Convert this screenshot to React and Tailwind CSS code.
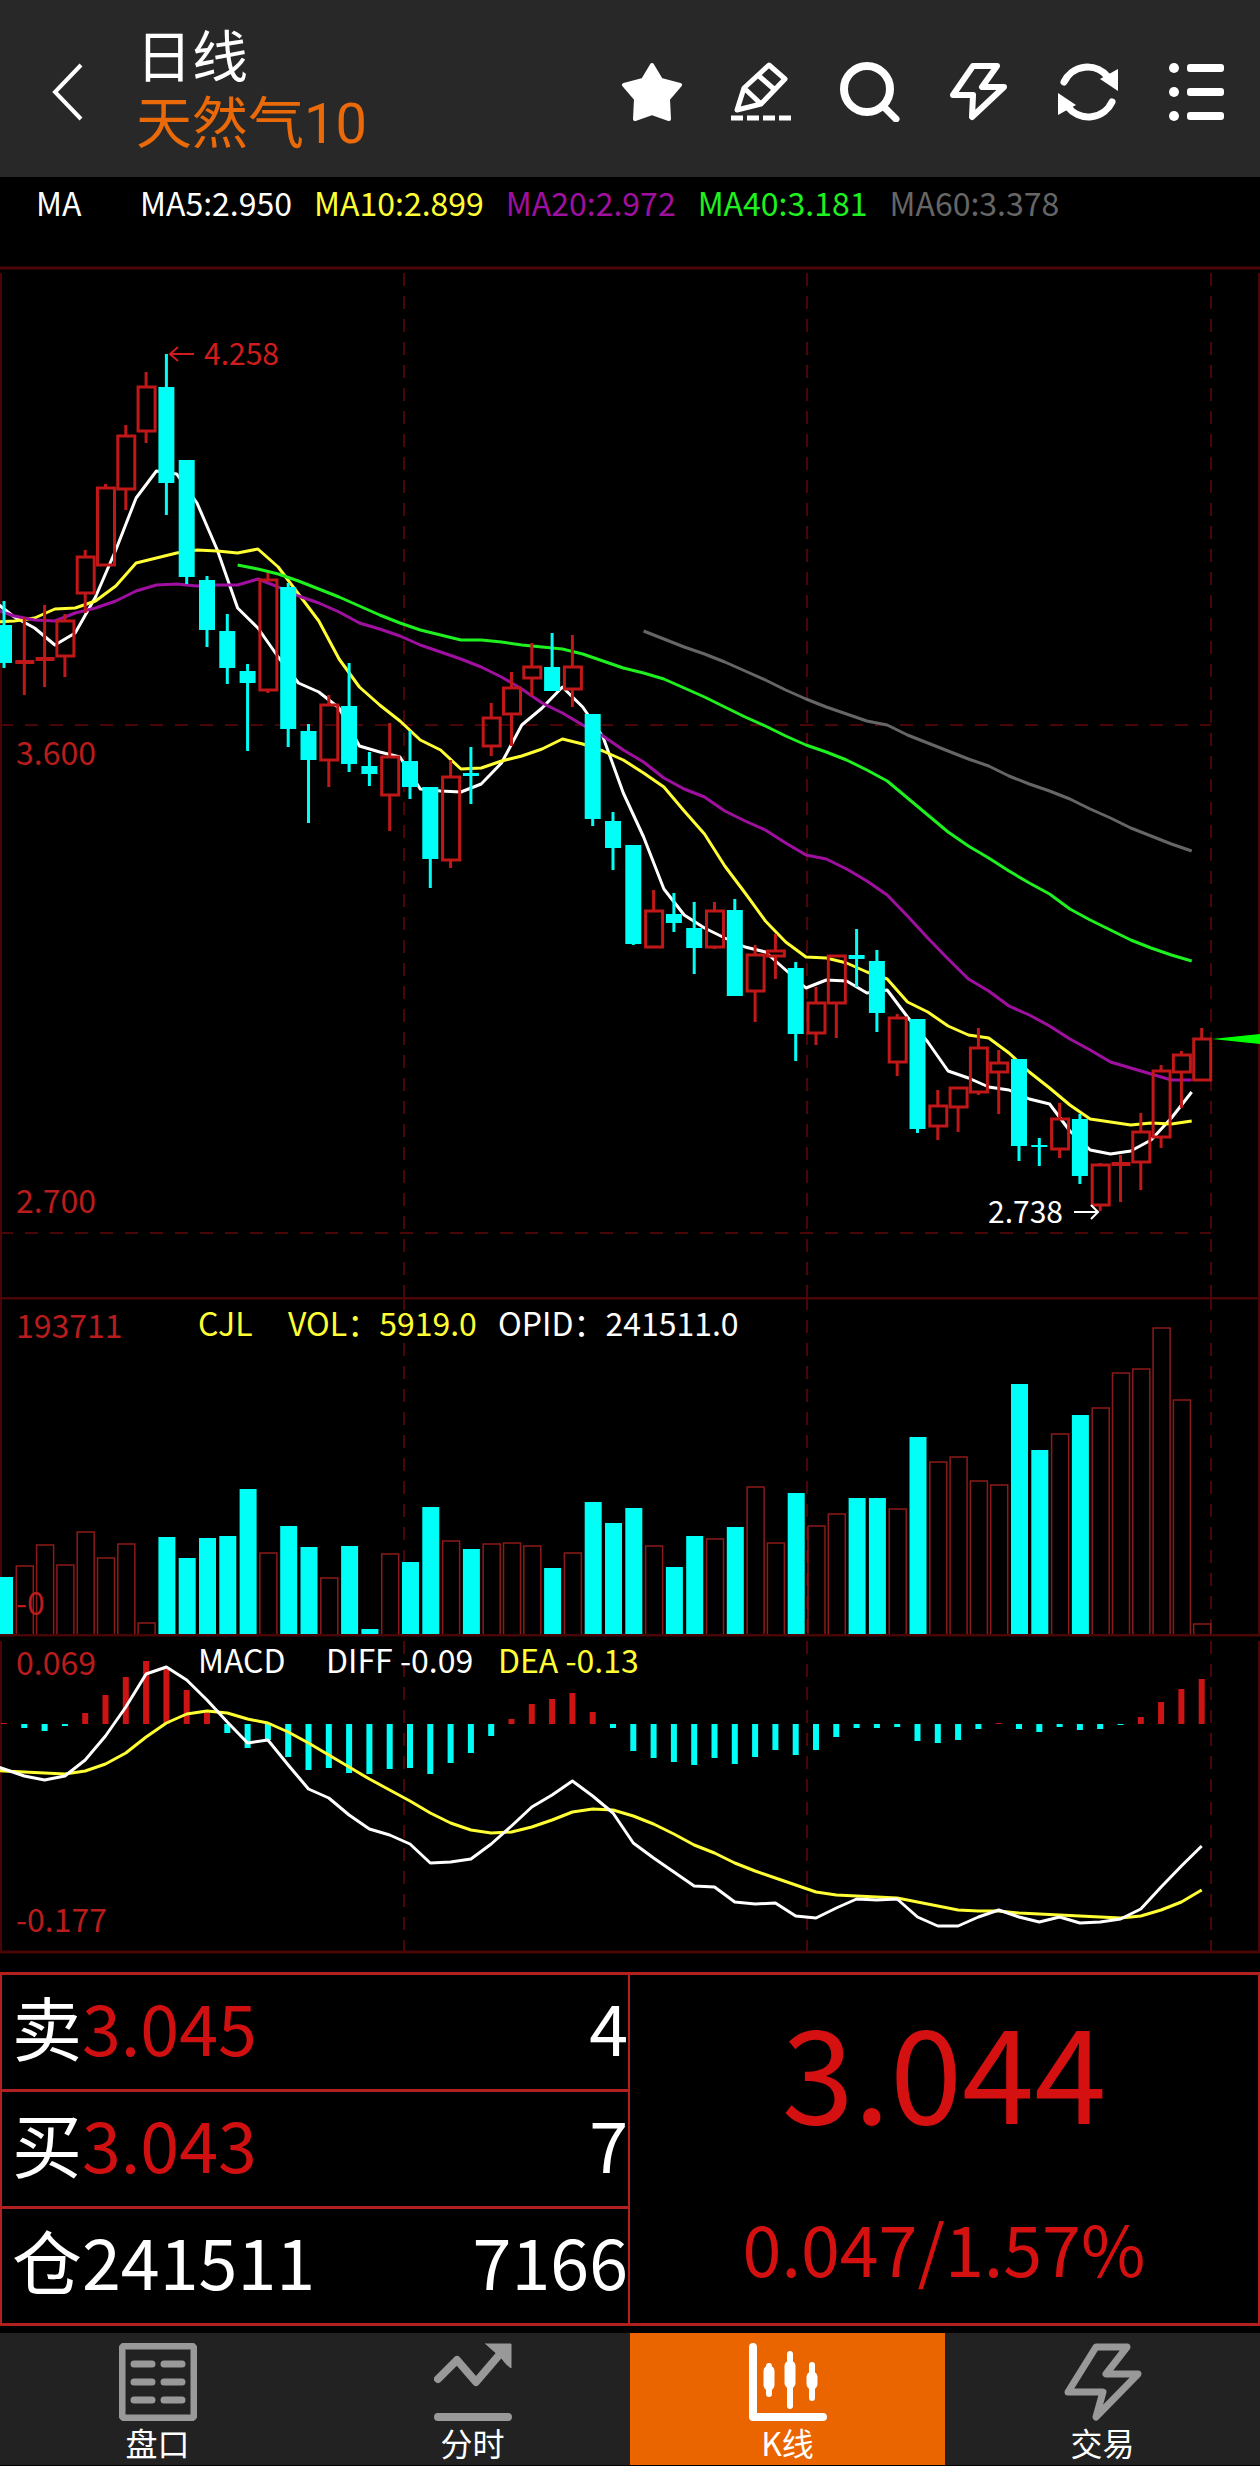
import { useState } from "react";

// [direction, high, body top, body bottom, low]
const candles = [
  ["d", 601, 625, 663, 668], ["u", 617, 662, 662, 695], ["u", 605, 659, 659, 687], ["u", 614, 621, 656, 677],
  ["u", 550, 557, 593, 613], ["u", 484, 488, 565, 565], ["u", 425, 436, 489, 510], ["u", 372, 387, 431, 443],
  ["d", 354, 387, 483, 515], ["d", 460, 460, 577, 584], ["d", 576, 580, 630, 647], ["d", 614, 631, 668, 684],
  ["d", 664, 671, 683, 751], ["u", 573, 580, 690, 693], ["d", 583, 587, 729, 747], ["d", 724, 731, 760, 823],
  ["u", 695, 705, 760, 787], ["d", 663, 706, 764, 772], ["d", 752, 766, 774, 786], ["u", 723, 757, 795, 831],
  ["d", 731, 761, 787, 799], ["d", 787, 787, 859, 888], ["u", 760, 777, 860, 868], ["d", 747, 773, 776, 804],
  ["u", 703, 718, 746, 756], ["u", 672, 688, 714, 746], ["u", 643, 667, 678, 696], ["d", 633, 667, 691, 691],
  ["u", 635, 667, 689, 707], ["d", 714, 714, 819, 826], ["d", 812, 821, 848, 870], ["d", 845, 845, 944, 945],
  ["u", 890, 911, 947, 947], ["d", 893, 914, 923, 932], ["d", 902, 928, 948, 974], ["u", 902, 911, 947, 949],
  ["d", 899, 910, 996, 996], ["u", 945, 955, 991, 1022], ["u", 934, 951, 956, 979], ["d", 962, 968, 1034, 1061],
  ["u", 987, 1003, 1033, 1045], ["u", 955, 956, 1003, 1038], ["d", 929, 955, 959, 987], ["d", 950, 961, 1013, 1032],
  ["u", 1014, 1018, 1062, 1076], ["d", 1019, 1019, 1129, 1133], ["u", 1090, 1106, 1126, 1140], ["u", 1088, 1088, 1107, 1132],
  ["u", 1028, 1048, 1092, 1095], ["u", 1050, 1063, 1072, 1114], ["d", 1059, 1059, 1146, 1161], ["d", 1138, 1145, 1147, 1166],
  ["u", 1103, 1119, 1149, 1158], ["d", 1114, 1119, 1176, 1184], ["u", 1163, 1165, 1205, 1211], ["u", 1155, 1164, 1164, 1202],
  ["u", 1113, 1132, 1162, 1190], ["u", 1065, 1071, 1137, 1148], ["u", 1051, 1055, 1072, 1108], ["u", 1028, 1039, 1080, 1080],
];

const ma5 = [
  601, 617, 628, 645, 633, 597, 550, 498, 471, 474, 503, 550, 608, 628, 657, 683, 692, 708, 746, 752, 757, 789, 791, 792,
  784, 763, 725, 708, 687, 707, 737, 793, 837, 889, 915, 928, 938, 947, 952, 970, 988, 980, 981, 993, 990, 1017, 1042,
  1071, 1078, 1087, 1090, 1099, 1104, 1131, 1150, 1154, 1151, 1140, 1118, 1092,
];
const ma10 = [
  622, 621, 618, 609, 608, 601, 586, 563, 558, 553, 550, 551, 553, 549, 567, 594, 621, 659, 687, 705, 721, 740, 750, 769,
  768, 761, 756, 749, 739, 744, 751, 760, 773, 787, 811, 834, 866, 893, 921, 942, 957, 958, 963, 972, 979, 1002, 1012,
  1026, 1035, 1038, 1053, 1072, 1088, 1105, 1119, 1122, 1125, 1123, 1124, 1121,
];
const ma20 = [
  609, 616, 620, 621, 613, 608, 601, 591, 585, 584, 586, 585, 585, 579, 587, 596, 603, 612, 623, 629, 636, 645, 652, 659,
  667, 677, 689, 703, 713, 725, 736, 750, 762, 778, 789, 797, 811, 821, 830, 843, 855, 859, 869, 881, 895, 916, 938, 959,
  979, 991, 1006, 1015, 1026, 1039, 1050, 1062, 1068, 1074, 1080, 1080,
];
const ma40 = [
  565, 569, 574, 581, 589, 597, 606, 615, 623, 630, 635, 640, 640, 642, 645, 647, 649, 654, 661, 668, 673, 679, 688, 697,
  707, 717, 726, 736, 745, 752, 760, 770, 781, 798, 815, 832, 846, 858, 871, 883, 894, 909, 920, 930, 940, 948, 955, 961,
];
const ma60 = [
  631, 639, 647, 654, 662, 671, 680, 690, 699, 707, 714, 721, 725, 735, 743, 751, 759, 766, 776, 784, 791, 799, 809, 818,
  828, 836, 844, 851,
];

const volumes = [
  58, 69, 90, 70, 103, 77, 91, 12, 98, 77, 97, 99, 146, 82, 109, 88, 57, 89, 6, 81, 73, 128, 94, 86, 91, 92, 89, 67, 82,
  133, 112, 127, 89, 68, 99, 96, 108, 148, 92, 142, 109, 121, 137, 137, 126, 198, 173, 178, 154, 150, 251, 185, 201, 220,
  227, 262, 266, 307, 235, 11,
];

const macdBars = [
  1, -4, -7, -2, 11, 29, 47, 63, 56, 34, 11, -9, -24, -16, -33, -46, -44, -49, -50, -45, -44, -50, -39, -29, -12, 5, 20,
  25, 31, 12, -4, -27, -34, -38, -41, -34, -40, -33, -26, -31, -26, -13, -4, -4, -3, -17, -19, -16, -5, 1, -5, -8, -3, -6,
  -5, -1, 7, 22, 35, 45,
];
const diff = [
  1769, 1776, 1780, 1776, 1760, 1736, 1707, 1674, 1667, 1680, 1700, 1722, 1743, 1740, 1765, 1789, 1798, 1815, 1829, 1835,
  1844, 1863, 1862, 1859, 1844, 1826, 1807, 1795, 1781, 1796, 1813, 1843, 1858, 1872, 1886, 1887, 1902, 1904, 1903, 1916,
  1918, 1908, 1899, 1900, 1899, 1917, 1926, 1926, 1917, 1910, 1917, 1922, 1917, 1923, 1922, 1919, 1909, 1887, 1866, 1846,
];
const dea = [
  1771, 1772, 1773, 1774, 1771, 1764, 1753, 1737, 1723, 1714, 1711, 1713, 1719, 1723, 1732, 1743, 1755, 1767, 1779, 1790,
  1801, 1813, 1823, 1830, 1833, 1832, 1827, 1820, 1812, 1809, 1810, 1816, 1824, 1834, 1845, 1853, 1863, 1871, 1878, 1885,
  1892, 1895, 1896, 1897, 1898, 1902, 1906, 1910, 1911, 1911, 1913, 1914, 1915, 1916, 1917, 1918, 1916, 1910, 1902, 1890,
];

const CYAN = "#00fff6";
const RED = "#c01818";
const GRID = "#4a0606";

const xAt = (i) => 4 + i * 20.3;

const toPoints = (values, start = 0, shift = 0) =>
  values.map((v, i) => `${(xAt(i + start) + shift).toFixed(1)},${v}`).join(" ");

const Line = ({ points, color }) => (
  <polyline points={points} fill="none" stroke={color} strokeWidth="3" strokeLinejoin="round" />
);

const VerticalGrid = ({ top, bottom }) => (
  <g stroke={GRID} strokeWidth="2">
    {[404, 807, 1211].map((x) => (
      <line key={x} x1={x} x2={x} y1={top} y2={bottom} strokeDasharray="13 10" />
    ))}
    <line x1="1" x2="1" y1={top} y2={bottom} />
    <line x1="1259" x2="1259" y1={top} y2={bottom} />
  </g>
);

const AxisLabel = ({ y, children }) => (
  <text x="16" y={y} fontSize="32" fill="#b81c1c">
    {children}
  </text>
);

const PriceChart = () => (
  <svg viewBox="0 266 1260 1031" className="block w-full" role="img" aria-label="K线图">
    <line x1="0" x2="1260" y1="268" y2="268" stroke={GRID} strokeWidth="3" />
    <VerticalGrid top={273} bottom={1297} />
    <g stroke={GRID} strokeWidth="2" strokeDasharray="13 12">
      <line x1="0" x2="1211" y1="725" y2="725" />
      <line x1="0" x2="1211" y1="1233" y2="1233" />
    </g>

    <Line points={toPoints(ma5, 0, -10)} color="#ffffff" />
    <Line points={toPoints(ma10, 0, -10)} color="#ffff33" />
    <Line points={toPoints(ma20, 0, -10)} color="#a010a0" />
    <Line points={toPoints(ma40, 12, -10)} color="#1ff01f" />
    <Line points={toPoints(ma60, 32, -10)} color="#666666" />

    {candles.map(([dir, high, top, bottom, low], i) => {
      const x = xAt(i);
      if (dir === "d") {
        return (
          <g key={i} fill={CYAN}>
            <rect x={x - 1.5} y={high} width="3" height={low - high} />
            <rect x={x - 8} y={top} width="16" height={bottom - top} />
          </g>
        );
      }
      return (
        <g key={i} fill="none" stroke={RED} strokeWidth="3">
          <path d={`M${x} ${high}V${top}M${x} ${bottom}V${low}`} />
          {top === bottom ? (
            <path d={`M${x - 9} ${top}h19`} strokeWidth="4" />
          ) : (
            <rect x={x - 8} y={top} width="17" height={bottom - top} />
          )}
        </g>
      );
    })}

    <AxisLabel y={765}>3.600</AxisLabel>
    <AxisLabel y={1213}>2.700</AxisLabel>

    <path d="M194 354H170M178 347L170 354L178 361" fill="none" stroke="#d01c1c" strokeWidth="2" />
    <text x="204" y="365" fontSize="30" fill="#d01c1c">4.258</text>
    <text x="988" y="1223" fontSize="30" fill="#ffffff">2.738</text>
    <path d="M1074 1212H1098M1091 1205L1098 1212L1091 1219" fill="none" stroke="#ffffff" strokeWidth="2" />
    <path d="M1212 1039L1260 1034V1044Z" fill="#00ff00" />
  </svg>
);

const VolumeChart = () => (
  <svg viewBox="0 1297 1260 337" className="block w-full" role="img" aria-label="成交量">
    <VerticalGrid top={1297} bottom={1634} />
    <line x1="0" x2="1260" y1="1298" y2="1298" stroke={GRID} strokeWidth="3" />
    {volumes.map((v, i) =>
      candles[i][0] === "d" ? (
        <rect key={i} x={xAt(i) - 8} y={1635 - v} width="17" height={v} fill={CYAN} />
      ) : (
        <rect key={i} x={xAt(i) - 8} y={1635 - v} width="17" height={v} fill="none" stroke="#8c1a1a" strokeWidth="1.5" />
      )
    )}
    <AxisLabel y={1338}>193711</AxisLabel>
    <AxisLabel y={1615}>-0</AxisLabel>
  </svg>
);

const MacdChart = () => (
  <svg viewBox="0 1634 1260 320" className="block w-full" role="img" aria-label="MACD">
    <VerticalGrid top={1641} bottom={1952} />
    <g stroke={GRID} strokeWidth="3">
      <line x1="0" x2="1260" y1="1635" y2="1635" />
      <line x1="0" x2="1260" y1="1952" y2="1952" />
    </g>
    {macdBars.map((v, i) => (
      <rect
        key={i}
        x={xAt(i) - 3}
        y={v > 0 ? 1724 - v : 1724}
        width="6"
        height={Math.abs(v)}
        fill={v > 0 ? "#cc1414" : CYAN}
      />
    ))}
    <Line points={`-16,1770 ${toPoints(dea)}`} color="#ffff33" />
    <Line points={`-16,1762 ${toPoints(diff)}`} color="#ffffff" />
    <AxisLabel y={1675}>0.069</AxisLabel>
    <AxisLabel y={1932}>-0.177</AxisLabel>
  </svg>
);

const IconButton = ({ label, children }) => (
  <button type="button" aria-label={label} className="size-[60px] shrink-0 text-white">
    <svg viewBox="0 0 60 60" className="size-full" fill="none" stroke="currentColor">
      {children}
    </svg>
  </button>
);

const Header = () => (
  <header className="flex h-[177px] bg-[#282828] pl-[38px] pr-[33px]">
    <div className="flex items-center pt-[6px]">
      <IconButton label="返回">
        <path d="M43 3L17 30L43 57" strokeWidth="4" />
      </IconButton>
    </div>
    <div className="ml-[38px] grow pt-[25px] font-[Roboto,'Noto_Sans_CJK_SC',sans-serif] text-[56px] leading-[66px]">
      <h1 className="text-white">日线</h1>
      <p className="text-[#ea6a0a]">天然气10</p>
    </div>
    <div className="flex items-center gap-[49px] pt-[6px]">
      <IconButton label="收藏">
        <path
          d="M30 3L39 18L58 23L46 37L47 57L30 51L13 57L14 37L2 23L21 18Z"
          fill="currentColor"
          strokeWidth="4"
          strokeLinejoin="round"
        />
      </IconButton>
      <IconButton label="画线">
        <path d="M38 3L54 17L30 42L6 48L13 26ZM28 14L44 28M13 26L30 42" strokeWidth="5" strokeLinejoin="round" />
        <path d="M0 56H60" strokeWidth="5" strokeDasharray="12 4" />
      </IconButton>
      <IconButton label="搜索">
        <circle cx="27" cy="27" r="23" strokeWidth="8" />
        <path d="M43 44L56 57" strokeWidth="7" strokeLinecap="round" />
      </IconButton>
      <IconButton label="闪电下单">
        <path d="M24 4H48L33 25H55L23 55L24 33H4Z" strokeWidth="6" strokeLinejoin="round" />
      </IconButton>
      <IconButton label="刷新">
        <g id="half">
          <path d="M6 20A26 26 0 0 1 50 15" strokeWidth="7" strokeLinecap="round" />
          <path d="M60 7V29L42 17Z" fill="currentColor" stroke="none" />
        </g>
        <use href="#half" transform="rotate(180 30 30)" />
      </IconButton>
      <IconButton label="菜单">
        <g fill="currentColor" stroke="none">
          {[6, 30, 54].map((y) => (
            <g key={y}>
              <circle cx="7" cy={y} r="5" />
              <rect x="20" y={y - 4} width="37" height="8" rx="3" />
            </g>
          ))}
        </g>
      </IconButton>
    </div>
  </header>
);

const Averages = () => (
  <div className="flex h-[89px] gap-[22px] pl-[36px] pt-[3px] text-[32px] leading-[44px]">
    <span className="w-[82px] text-white">MA</span>
    <span className="text-white">MA5:2.950</span>
    <span className="text-[#ffff33]">MA10:2.899</span>
    <span className="text-[#a010a0]">MA20:2.972</span>
    <span className="text-[#1ff01f]">MA40:3.181</span>
    <span className="text-[#666666]">MA60:3.378</span>
  </div>
);

const quotes = [
  { label: "卖", value: "3.045", amount: "4", color: "text-[#d01010]" },
  { label: "买", value: "3.043", amount: "7", color: "text-[#d01010]" },
  { label: "仓", value: "241511", amount: "7166", color: "text-white" },
];

const Quotes = () => (
  <section className="mt-[18px] grid grid-cols-2 border-x-2 border-y-3 border-[#b22020]">
    <dl className="divide-y-3 divide-[#b22020] border-r-2 border-[#b22020] text-[70px] leading-[102px] text-white">
      {quotes.map((q) => (
        <div key={q.label} className="flex h-[117px] pl-[10px] last:h-[114px]">
          <dt>{q.label}</dt>
          <dd className={q.color}>{q.value}</dd>
          <dd className="ml-auto">{q.amount}</dd>
        </div>
      ))}
    </dl>
    <div className="flex flex-col items-center gap-3 text-[#d41010]">
      <p className="text-[130px] leading-[184px]">3.044</p>
      <p className="text-[70px] leading-[152px]">0.047/1.57%</p>
    </div>
  </section>
);

const tabs = [
  {
    name: "盘口",
    icon: (
      <>
        <rect x="3" y="3" width="72" height="72" rx="3" strokeWidth="7" />
        <path d="M15 21H33M45 21H63M15 39H33M45 39H63M15 57H33M45 57H63" strokeWidth="7" />
      </>
    ),
  },
  {
    name: "分时",
    icon: (
      <>
        <path d="M4 36L23 17L42 39L66 11M4 74H74" strokeWidth="8" />
        <path d="M52 1H77V25Q72 22 66 13Q58 7 52 1Z" fill="currentColor" strokeWidth="1" />
      </>
    ),
  },
  {
    name: "K线",
    icon: (
      <>
        <path d="M4 4V74H74" strokeWidth="8" />
        <path d="M20 23V51M41 11V63M63 22V55" strokeWidth="6" />
        <path d="M20 28V42M41 23V40M63 34V41" strokeWidth="11" />
      </>
    ),
  },
  {
    name: "交易",
    icon: <path d="M32 4H63L42 31H74L32 74L39 49H4Z" strokeWidth="7" />,
  },
];

const TabBar = () => {
  const [active, setActive] = useState("K线");

  return (
    <nav className="mt-[7px] grid h-[132px] grid-cols-4 bg-[#222222]">
      {tabs.map((tab) => (
        <button
          key={tab.name}
          type="button"
          onClick={() => setActive(tab.name)}
          className={`flex flex-col items-center pt-[10px] ${
            active === tab.name ? "bg-[#ea6500] text-white" : "text-[#999999]"
          }`}>
          <svg
            viewBox="0 0 78 78"
            className="size-[78px] shrink-0"
            fill="none"
            stroke="currentColor"
            strokeLinecap="round"
            strokeLinejoin="round">
            {tab.icon}
          </svg>
          <span className="text-[32px] leading-[42px] text-white">{tab.name}</span>
        </button>
      ))}
    </nav>
  );
};

const App = () => (
  <div className="min-h-screen bg-black font-['Noto_Sans_CJK_SC',sans-serif]">
    <Header />
    <Averages />
    <PriceChart />
    <section className="relative">
      <VolumeChart />
      <div className="absolute left-[198px] top-[3px] flex text-[32px] leading-[44px] text-[#ffff33]">
        <span className="w-[90px]">CJL</span>
        <span className="w-[210px]">VOL：5919.0</span>
        <span className="text-white">OPID：241511.0</span>
      </div>
    </section>
    <section className="relative">
      <MacdChart />
      <div className="absolute left-[198px] top-[3px] flex text-[32px] leading-[44px] text-white">
        <span className="w-[128px]">MACD</span>
        <span className="w-[172px]">DIFF -0.09</span>
        <span className="text-[#ffff33]">DEA -0.13</span>
      </div>
    </section>
    <Quotes />
    <TabBar />
  </div>
);

export default App;
